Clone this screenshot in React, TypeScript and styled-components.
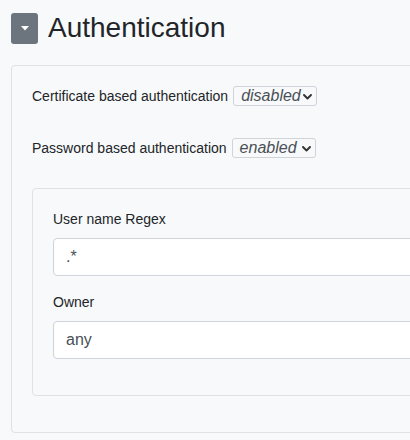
import React from "react";
import styled, { createGlobalStyle } from "styled-components";

const Global = createGlobalStyle`
  html, body { margin: 0; padding: 0; background: #f8f9fa; overflow: hidden; }
  body { font-family: "Liberation Sans", Arial, sans-serif; color: #212529; }
`;

const Page = styled.div`
  width: 720px;
  padding: 11px 0 0 11px;
`;

const Header = styled.div`
  display: flex;
  align-items: center;
  gap: 10px;
  margin-bottom: 20px;
`;

const ToggleButton = styled.button`
  width: 27px;
  height: 31px;
  margin-top: 2px;
  padding: 0;
  border: none;
  border-radius: 3px;
  background: #6c757d;
  display: flex;
  align-items: center;
  justify-content: center;
`;

const Title = styled.h3`
  margin: 0;
  font-size: 28px;
  font-weight: 400;
  line-height: 1.2;
  color: #212529;
`;

const Card = styled.div`
  border: 1px solid #dee2e6;
  border-radius: 4px;
  background: #f8f9fa;
  padding: 20px;
`;

const OuterCard = styled(Card)`
  display: flex;
  flex-direction: column;
`;

const Row = styled.div<{ $mb: number }>`
  display: flex;
  align-items: center;
  gap: 5px;
  height: 20px;
  margin-bottom: ${(p) => p.$mb}px;
  font-size: 14px;
`;

const FakeSelect = styled.div`
  position: relative;
  box-sizing: border-box;
  width: 84px;
  height: 20px;
  border: 1px solid #ced4da;
  border-radius: 3px;
  background: #f8f9fa;
  padding-left: 7px;
  font-size: 16px;
  font-style: italic;
  color: #495057;
  line-height: 18px;
`;

const Chevron = styled.svg`
  position: absolute;
  right: 4px;
  top: 7px;
`;

const InnerCard = styled(Card)`
  margin-bottom: 16px;
`;

const Group = styled.div`
  margin-bottom: 16px;
`;

const Label = styled.label`
  display: block;
  font-size: 14px;
  line-height: 20px;
  margin-bottom: 9px;
  color: #212529;
`;

const Input = styled.input`
  box-sizing: border-box;
  display: block;
  width: 100%;
  height: 38px;
  border: 1px solid #ced4da;
  border-radius: 4px;
  background: #fff;
  padding: 0 12px;
  font-family: "Liberation Sans", Arial, sans-serif;
  font-size: 16px;
  color: #495057;
  outline: none;
`;

function Select({ value }: { value: string }) {
  return (
    <FakeSelect>
      {value}
      <Chevron width="9" height="6" viewBox="0 0 9 6">
        <path d="M1 1 L4.5 4.5 L8 1" fill="none" stroke="#333" strokeWidth="1.9" strokeLinecap="round" strokeLinejoin="round" />
      </Chevron>
    </FakeSelect>
  );
}

export default function App() {
  return (
    <>
      <Global />
      <Page>
        <Header>
          <ToggleButton>
            <svg width="8" height="5" viewBox="0 0 8 5">
              <path d="M0 0 H8 L4 4.5 Z" fill="#fff" />
            </svg>
          </ToggleButton>
          <Title>Authentication</Title>
        </Header>
        <OuterCard>
          <Row $mb={32}>
            <span>Certificate based authentication</span>
            <Select value="disabled" />
          </Row>
          <Row $mb={30}>
            <span>Password based authentication</span>
            <Select value="enabled" />
          </Row>
          <InnerCard>
            <Group>
              <Label>User name Regex</Label>
              <Input defaultValue=".*" />
            </Group>
            <Group>
              <Label>Owner</Label>
              <Input defaultValue="any" />
            </Group>
          </InnerCard>
        </OuterCard>
      </Page>
    </>
  );
}
